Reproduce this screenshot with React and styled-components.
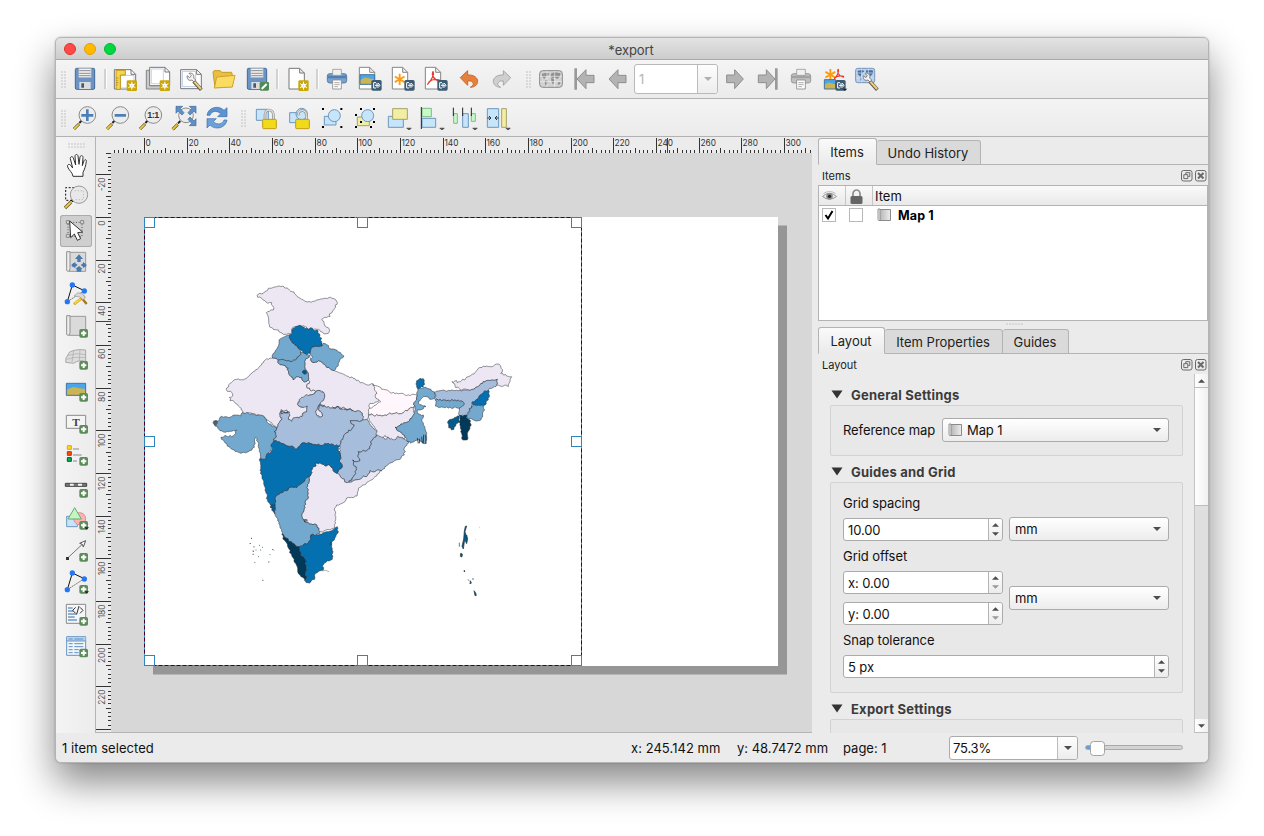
import React from "react";
import styled, { createGlobalStyle } from "styled-components";

const Global = createGlobalStyle`
  * { box-sizing: border-box; }
  html, body { margin: 0; background: #fff; }
  body { font-family: Inter, "Liberation Sans", sans-serif; font-size: 13px; color: #111; overflow: hidden; }
  svg { display: block; overflow: visible; flex: none; }
`;

/* ---------- window frame ---------- */
const Desktop = styled.div`
  width: 1264px;
  height: 836px;
  padding: 37px 55px;
  overflow: hidden;
`;
const Window = styled.div`
  width: 1154px;
  height: 726px;
  display: flex;
  flex-direction: column;
  border: 1px solid #b4b4b4;
  border-radius: 6px;
  background: #ebebeb;
  overflow: hidden;
  box-shadow: 0 19px 38px rgba(0, 0, 0, 0.48), 0 0 2px rgba(0, 0, 0, 0.25);
`;
const TitleBar = styled.div`
  height: 22px;
  flex: none;
  display: grid;
  grid-template-columns: 100px 1fr 102px;
  align-items: center;
  background: linear-gradient(#e3e3e3, #cdcdcd);
  border-bottom: 1px solid #a9a9a9;
`;
const Lights = styled.div`
  display: flex;
  gap: 8px;
  padding-left: 8px;
`;
const Light = styled.span`
  width: 12px;
  height: 12px;
  border-radius: 50%;
  background: ${(p) => p.$c};
  border: 1px solid ${(p) => p.$b};
`;
const Title = styled.div`
  text-align: center;
  color: #444;
  padding-top: 2px;
  letter-spacing: -0.1px;
`;

/* ---------- toolbars ---------- */
const ToolBar = styled.div`
  height: ${(p) => p.$h}px;
  flex: none;
  display: flex;
  align-items: flex-start;
  background: linear-gradient(#f4f4f4, #ebebeb);
  border-bottom: 1px solid #b2b2b2;
`;
const ToolButton = styled.div`
  width: 33px;
  height: 31px;
  padding: 7px 5px 0 4px;
`;
const Separator = styled.div`
  width: 7px;
  height: 20px;
  margin-top: 9px;
  display: flex;
  justify-content: center;
  &::before {
    content: "";
    width: 2px;
    background: #d2d2d2;
    border-right: 1px solid #fbfbfb;
  }
`;
const Dots = styled.div`
  width: ${(p) => p.$w}px;
  height: ${(p) => p.$h}px;
  flex: none;
  margin: ${(p) => p.$m};
  background-image: radial-gradient(circle at 1px 1px, #c2c2c2 0.5px, transparent 0.9px);
  background-size: 3px 3px;
`;
const PageCombo = styled.div`
  width: 84px;
  height: 30px;
  margin: 4px 1px 0 0;
  display: flex;
  align-items: center;
  border: 1px solid #b9b9b9;
  border-radius: 3px;
  background: #fff;
  color: #b5b5b5;
  padding-left: 4px;
`;
const ComboArrow = styled.div`
  width: ${(p) => p.$w}px;
  align-self: stretch;
  margin-left: auto;
  display: flex;
  align-items: center;
  justify-content: center;
  border-left: 1px solid #bcbcbc;
  background: linear-gradient(#fdfdfd, #ededed);
  border-radius: 0 3px 3px 0;
`;

/* ---------- body ---------- */
const Body = styled.div`
  height: 596px;
  flex: none;
  display: flex;
`;
const SideTools = styled.div`
  width: 40px;
  flex: none;
  border-right: 1px solid #b4b4b4;
  background: linear-gradient(90deg, #f4f4f4, #ececec);
`;
const SideButton = styled.div`
  width: 32px;
  height: 32px;
  margin-left: 4px;
  padding: 4px;
  border-radius: 3px;
  ${(p) => p.$on && "background:#cfcfcf; box-shadow: inset 0 0 0 1px #ababab;"}
`;
const Editor = styled.div`
  width: 716px;
  flex: none;
  display: grid;
  grid-template-columns: 15px 701px;
  grid-template-rows: 16px 579px;
  border-bottom: 1px solid #b4b4b4;
`;
const RulerBox = styled.div`
  overflow: hidden;
  background: #ececec;
`;
const Canvas = styled.div`
  position: relative;
  overflow: hidden;
  background: #d7d7d7;
`;
const Paper = styled.div`
  position: absolute;
  left: 33px;
  top: 64px;
  width: 634px;
  height: 449px;
  background: #fff;
  box-shadow: 9px 8.5px 0 #969696;
`;

/* ---------- dock ---------- */
const Dock = styled.div`
  width: 396px;
  display: flex;
  flex-direction: column;
`;
const Tabs = styled.div`
  height: 27px;
  margin: 1px 0 0 6px;
  flex: none;
  display: flex;
  align-items: flex-end;
  border-bottom: 1px solid #b3b3b3;
`;
const Tab = styled.div`
  width: ${(p) => p.$w}px;
  height: ${(p) => (p.$on ? 27 : 25)}px;
  margin-bottom: -1px;
  padding-right: 1px;
  display: flex;
  align-items: center;
  justify-content: center;
  color: #222;
  border: 1px solid #b3b3b3;
  border-left-width: ${(p) => (p.$joined ? 0 : 1)}px;
  border-bottom-color: ${(p) => (p.$on ? "#ebebeb" : "#b3b3b3")};
  border-radius: 3px 3px 0 0;
  background: ${(p) => (p.$on ? "linear-gradient(#fafafa,#ebebeb)" : "#dadada")};
`;
const DockTitle = styled.div`
  height: 20px;
  flex: none;
  padding: 2px 1px 0 10px;
  display: flex;
  align-items: center;
  font-size: 11px;
  color: #222;
  span { flex: 1; }
`;
const Table = styled.div`
  height: 136px;
  flex: none;
  margin-left: 6px;
  border: 1px solid #b3b3b3;
  background: #fff;
`;
const TableHead = styled.div`
  height: 20px;
  display: flex;
  border-bottom: 1px solid #b3b3b3;
  background: linear-gradient(#fafafa, #e9e9e9);
`;
const HeadCell = styled.div`
  width: ${(p) => p.$w};
  display: flex;
  align-items: center;
  padding: 1px 0 0 ${(p) => p.$pl}px;
  border-right: ${(p) => (p.$last ? 0 : 1)}px solid #c6c6c6;
`;
const TableRow = styled.div`
  display: flex;
  align-items: center;
  height: 18px;
  padding-left: 3px;
  font-weight: 700;
  font-size: 12.5px;
  color: #000;
`;
const ItemName = styled.div`
  margin-left: 6px;
  letter-spacing: 0.15px;
`;
const Check = styled.div`
  width: 14px;
  height: 14px;
  flex: none;
  margin-right: ${(p) => p.$mr}px;
  border: 1px solid #b9b9b9;
  background: #fff;
`;
const Scroll = styled.div`
  height: 359px;
  display: flex;
  overflow: hidden;
`;
const Form = styled.div`
  width: 382px;
  padding: 10px 11px 0 18px;
  flex: none;
  overflow: hidden;
`;
const Heading = styled.div`
  height: 21px;
  margin-top: ${(p) => p.$mt || 0}px;
  display: flex;
  align-items: center;
  gap: 8px;
  padding-left: 1px;
  font-weight: 700;
  color: #3b3b3b;
  letter-spacing: 0.22px;
`;
const Group = styled.div`
  height: ${(p) => p.$h}px;
  padding: ${(p) => p.$pt}px 13px 0 12px;
  border: 1px solid #d2d2d2;
  border-radius: 2px;
  background: #e8e8e8;
`;
const Line = styled.div`
  display: flex;
  align-items: ${(p) => p.$align || "center"};
  gap: ${(p) => p.$gap || 0}px;
  margin-top: ${(p) => p.$mt || 0}px;
`;
const Label = styled.div`
  height: 18px;
  line-height: 18px;
  width: ${(p) => p.$w || "auto"};
  margin-top: ${(p) => p.$mt || 0}px;
  white-space: nowrap;
  letter-spacing: -0.07px;
`;
const Combo = styled.div`
  width: ${(p) => p.$w}px;
  height: 24px;
  display: flex;
  align-items: center;
  gap: 4px;
  padding: 0 7px 0 5px;
  border: 1px solid #ababab;
  border-radius: 3px;
  background: linear-gradient(#fff, #ececec);
  span { flex: 1; letter-spacing: -0.1px; }
`;
const SpinBox = styled.div`
  width: ${(p) => p.$w}px;
  height: 23px;
  display: flex;
  align-items: center;
  padding-left: 4px;
  border: 1px solid #ababab;
  border-radius: 3px;
  background: #fff;
  span { flex: 1; padding-top: 1px; letter-spacing: -0.1px; }
`;
const SpinArrows = styled.div`
  width: 14px;
  align-self: stretch;
  display: flex;
  flex-direction: column;
  align-items: center;
  justify-content: center;
  gap: 5px;
  border-left: 1px solid #b4b4b4;
  background: linear-gradient(#fff, #ececec);
  border-radius: 0 3px 3px 0;
`;
const Stack = styled.div`
  display: flex;
  flex-direction: column;
  gap: 8px;
`;
const ScrollBar = styled.div`
  width: 14px;
  display: flex;
  flex-direction: column;
  border-left: 1px solid #c3c3c3;
  background: #dfdfdf;
`;
const ScrollPart = styled.div`
  height: ${(p) => p.$h}px;
  margin-top: ${(p) => p.$mt || 0};
  display: flex;
  align-items: center;
  justify-content: center;
  background: linear-gradient(90deg, #fff, #f0f0f0);
  border-bottom: 1px solid #bdbdbd;
`;

/* ---------- status bar ---------- */
const Status = styled.div`
  height: 29px;
  flex: none;
  display: flex;
  align-items: center;
  padding: 1px 0 0 6px;
  background: #ebebeb;
`;
const StatusText = styled.div`
  width: ${(p) => p.$w}px;
  white-space: nowrap;
  letter-spacing: ${(p) => p.$ls || 0}px;
`;
const ZoomCombo = styled.div`
  width: 129px;
  height: 24px;
  display: flex;
  align-items: center;
  padding-left: 3px;
  border: 1px solid #ababab;
  border-radius: 3px;
  background: #fff;
  letter-spacing: -0.2px;
`;
const Slider = styled.div`
  position: relative;
  width: 98px;
  height: 5px;
  margin: 0 0 2px 7px;
  border: 1px solid #a9a9a9;
  border-radius: 3px;
  background: linear-gradient(90deg, #5aa0ea 10px, #d3d3d3 10px);
  &::after {
    content: "";
    position: absolute;
    left: 4px;
    top: -5px;
    width: 13px;
    height: 13px;
    border: 1px solid #a3a3a3;
    border-radius: 3.5px;
    background: #fdfdfd;
  }
`;

/* ---------- small glyphs ---------- */
const Tri = ({ up, c = "#4d4d4d", w = 8, h = 4 }) => (
  <svg width={w} height={h} viewBox="0 0 8 4"><path d={up ? "M0 4L4 0L8 4Z" : "M0 0L4 4L8 0Z"} fill={c} /></svg>
);
const MapGlyph = () => (
  <svg width="15" height="14" viewBox="0 0 15 14">
    <defs><linearGradient id="mg"><stop offset="0" stopColor="#b5b5b5" /><stop offset="1" stopColor="#ededed" /></linearGradient></defs>
    <path d="M2.5 1.5h11v11h-11z" fill="url(#mg)" stroke="#8a8a8a" />
    <path d="M1 1h2v11.5q-2 .5-2-1z" fill="#eee" stroke="#8a8a8a" strokeWidth=".9" />
  </svg>
);
const DockButtons = () => (
  <svg width="26" height="12" viewBox="0 0 26 12" fill="none" stroke="#6a6a6a">
    <rect x=".5" y=".5" width="10.5" height="10.5" rx="2" />
    <path d="M4.8 4.5V2.7h4v3.8H7.3M2.8 4.7h4v3.9h-4z" />
    <rect x="14.5" y=".5" width="10.5" height="10.5" rx="2" />
    <path d="M17 3l5.5 5.5M22.5 3L17 8.500" strokeWidth="2" />
  </svg>
);

/* Icons are drawn on a shared sheet at three units to the pixel; x and y pick each 72-unit cell. */
const Icon = ({ x, y, children }) => (
  <svg width="24" height="24" viewBox={`${x} ${y} 72 72`}>{children}</svg>
);
const Plus = ({ x, y }) => (
  <g>
    <rect x={x} y={y} width="26" height="26" rx="5" fill="#5b8c5a" />
    <path d={`M${x + 13} ${y + 5}v16M${x + 5} ${y + 13}h16`} stroke="#fff" strokeWidth="6" />
  </g>
);
const Star = ({ x, y }) => (
  <g>
    <rect x={x} y={y} width="31" height="32" rx="4" fill="#c9a60a" />
    <path d={`M${x + 15.500} ${y + 4}v24M${x + 5} ${y + 10}l21 12M${x + 5} ${y + 22}l21-12`} stroke="#fff" strokeWidth="3" />
    <circle cx={x + 15.5} cy={y + 16} r="6.5" fill="#fff" />
    <circle cx={x + 15.5} cy={y + 16} r="2.2" fill="#e6d58a" />
  </g>
);
const Export = ({ x, y }) => (
  <g>
    <rect x={x} y={y} width="31" height="32" rx="5" fill="#3d5b73" />
    <path d={`M${x + 14} ${y + 8}h-7v16h7M${x + 11} ${y + 16}h13M${x + 17} ${y + 9}v14M${x + 20} ${y + 9}l6 7-6 7`} fill="none" stroke="#fff" strokeWidth="3" />
  </g>
);
const Caret = ({ x, y }) => <path d={`M${x} ${y}h14v2l-5 5h-4l-5-5z`} fill="#555" />;
const Floppy = ({ x }) => (
  <g>
    <rect x={x} y="115" width="58" height="63" rx="4" fill="#6b93c4" stroke="#43699a" strokeWidth="3" />
    <path d={`M${x + 10} 115h38v28h-38z`} fill="#f0f0f0" stroke="#8c9fb3" strokeWidth="2" />
    <path d={`M${x + 12} 122h34M${x + 12} 130h34M${x + 12} 137h34`} stroke="#8e8e8e" strokeWidth="3" />
    <path d={`M${x + 12} 156h34v21h-34z`} fill="#dcdcdc" />
    <path d={`M${x + 18} 160h8v13h-8z`} fill="#3c5a80" />
  </g>
);
const Sheet = ({ x, w = 46 }) => (
  <path d={`M${x} 112h${w - 15}l15 15v50h-${w}zM${x + w - 15} 112v15h15`} fill="#fff" stroke="#858585" strokeWidth="3" />
);
const Printer = ({ x, a, b, s }) => (
  <g stroke={s} strokeWidth="2.5">
    <rect x={x} y="131" width="58" height="28" rx="7" fill={a} />
    <path d={`M${x + 1} 137h56v8h-56z`} fill={b} stroke="none" />
    <path d={`M${x + 16} 118h26v18h-26z`} fill="#f0f0f0" stroke="#9a9a9a" />
    <path d={`M${x + 16} 150h26v27h-26z`} fill="#fff" stroke="#888" />
    <path d={`M${x + 21} 158h16M${x + 21} 164h16M${x + 21} 170h11`} stroke="#999" />
  </g>
);
const Lens = ({ cx, cy = 255, r = 25, children }) => (
  <g>
    <path d={`M${cx - 40} ${cy + 42}L${cx - 25} ${cy + 27}`} stroke="#4d4a28" strokeWidth="9" />
    <path d={`M${cx - 40} ${cy + 42}L${cx - 26} ${cy + 28}`} stroke="#f3c832" strokeWidth="5.500" />
    <path d={`M${cx - 24} ${cy + 24}l7-7`} stroke="#222" strokeWidth="6" />
    <circle cx={cx} cy={cy} r={r} fill="#ececec" stroke="#8b8b8b" strokeWidth="3" />
    {children}
  </g>
);
const ArrowLeft = ({ x }) => (
  <path d={`M${x} 147l27-28v17h24v22h-24v18z`} fill="#b3b3b3" stroke="#8e8e8e" strokeWidth="3" strokeLinejoin="round" />
);
const ArrowRight = ({ x }) => (
  <path d={`M${x + 50} 147l-26-28v16h-24v23h24v18z`} fill="#b3b3b3" stroke="#8e8e8e" strokeWidth="3" strokeLinejoin="round" />
);
const Asterisk = ({ x, y, r }) => (
  <path d={`M${x} ${y - r}v${2 * r}M${x - r * 0.87} ${y - r / 2}l${r * 1.74} ${r}M${x - r * 0.87} ${y + r / 2}l${r * 1.74} ${-r}`} stroke="#ff9a0d" strokeWidth="5.5" />
);
const Wrench = ({ x, y }) => (
  <g>
    <path d={`M${x + 22} ${y + 25}L${x + 45} ${y + 50}`} stroke="#5e5a48" strokeWidth="11" />
    <path d={`M${x + 24} ${y + 26}L${x + 44} ${y + 48}`} stroke="#f0d080" strokeWidth="6" />
    <path d={`M${x + 3} ${y + 8}c-3 10 5 17 14 13l6 6 5-6-6-6c3-9-4-17-14-14l7 7-5 6z`} fill="#f2f2f2" stroke="#707070" strokeWidth="2.500" strokeLinejoin="round" />
  </g>
);
const Picture = ({ x, y, w, h }) => (
  <g>
    <path d={`M${x} ${y}h${w}v${h}h${-w}z`} fill="#4aa6e8" />
    <path d={`M${x} ${y + h * 0.55}l${w * 0.35} ${-h * 0.25}l${w * 0.65} ${h * 0.2}v${h / 2}h${-w}z`} fill="#c9b456" />
    <path d={`M${x} ${y}h${w}v${h}h${-w}z`} fill="none" stroke="#47749e" strokeWidth="3" />
  </g>
);
const Acrobat = ({ x, y, s }) => (
  <path transform={`translate(${x} ${y}) scale(${s})`} d="M17 0c4 8 0 20-17 40M17 0c-5 10 0 24 20 30M4 32c10-8 24-9 34-5" fill="none" stroke="#e83a2a" strokeWidth="4" />
);
const Corners = ({ x, y, w, h }) => (
  <path d={`M${x} ${y}h6M${x + w} ${y}h6M${x} ${y + h}h6M${x + w} ${y + h}h6`} stroke="#000" strokeWidth="6" />
);
const BLUE = { fill: "#c6e4fa", stroke: "#6d97bd", strokeWidth: 3 };
const YEL = { fill: "#f2efa3", stroke: "#a5a06a", strokeWidth: 3 };
const GRN = { fill: "#c8fac8", stroke: "#7fb98a", strokeWidth: 3 };

const Lock = ({ x, open }) => {
  const shackle = open ? `M${x + 8} 256c2-20 26-18 25 2v10` : `M${x + 8} 267v-12c0-20 25-20 25 0v12`;
  return (
    <g>
      <path d={shackle} fill="none" stroke="#8a8a8a" strokeWidth="8" />
      <path d={shackle} fill="none" stroke="#dedede" strokeWidth="4" />
      <rect x={x + 1} y="268" width="41" height="28" rx="3" fill="#f0da1c" stroke="#c49b12" strokeWidth="3" />
    </g>
  );
};

const fileTools = [
  <Icon x={69} y={111}><Floppy x={76} /></Icon>,
  "sep",
  <Icon x={189} y={111}>
    <path d="M193 119h50l14 14v44h-64z" fill="#fff" stroke="#777" strokeWidth="3" />
    <path d="M212 136h40v38h-40z" fill="none" stroke="#b9c8ee" strokeWidth="3" />
    <path d="M243 119v14h14" fill="none" stroke="#777" strokeWidth="3" />
    <path d="M198 121h28v14h-15v43h-13z" fill="#f5d450" stroke="#bd981b" strokeWidth="3" />
    <path d="M199 144h6M199 151h4M199 158h6M199 165h4" stroke="#8b6d10" strokeWidth="2" />
    <Star x={230} y={151} />
  </Icon>,
  <Icon x={288} y={111}>
    <path d="M289 121h12v46h42v10h-54z" fill="#cacaca" stroke="#858585" strokeWidth="3" />
    <path d="M299 112h46l14 14v41h-60z" fill="#fff" stroke="#777" strokeWidth="3" />
    <path d="M304 117h36v44h-36z" fill="none" stroke="#c7d3f2" strokeWidth="3" />
    <path d="M345 112v14h14" fill="none" stroke="#777" strokeWidth="3" />
    <Star x={329} y={151} />
  </Icon>,
  <Icon x={387} y={111}>
    <path d="M392 119h48l14 14v43h-62z" fill="#fff" stroke="#777" strokeWidth="3" />
    <path d="M397 124h40v46h-40z" fill="none" stroke="#b9c8ee" strokeWidth="3" />
    <path d="M440 119v14h14" fill="none" stroke="#777" strokeWidth="3" />
    <Wrench x={409} y={129} />
  </Icon>,
  <Icon x={486} y={111}>
    <path d="M489 126l3-4h19l4 5h30l2 9v34l-52 3z" fill="#e9bf3d" stroke="#c69a28" strokeWidth="3" strokeLinejoin="round" />
    <path d="M500 141l55-5-8 35-54 3z" fill="#fbdc62" stroke="#cfa22e" strokeWidth="3" strokeLinejoin="round" />
  </Icon>,
  <Icon x={585} y={111}>
    <Floppy x={592} />
    <rect x="629" y="156" width="28" height="26" rx="4" fill="#4f8a55" />
    <path d="M635 177l15-15" stroke="#fff" strokeWidth="6" />
  </Icon>,
  "sep",
  <Icon x={705} y={111}><path d="M717 115h32l14 14v48h-46zM749 115v14h14" fill="#fff" stroke="#777" strokeWidth="3" /><Star x={745} y={151} /></Icon>,
  "sep",
  <Icon x={45} y={111}><Printer x={52} a="#7ba1cd" b="#4e7fb5" s="#4a6f99" /></Icon>,
  <Icon x={144} y={111}><Sheet x={148} /><Picture x={150} y={134} w={44} h={29} /><Export x={184} y={150} /></Icon>,
  <Icon x={243} y={111}><Sheet x={247} /><Asterisk x={269} y={148} r={17} /><Export x={283} y={150} /></Icon>,
  <Icon x={342} y={111}><Sheet x={346} /><Acrobat x={352} y={124} s={1} /><Export x={382} y={150} /></Icon>,
  <Icon x={441} y={111}>
    <path d="M451 143l22-21v13c20-1 30 9 30 19s-8 17-22 18c8-5 11-10 7-15-3-4-9-5-15-4v13z" fill="#e5813d" stroke="#c86a2a" strokeWidth="3" strokeLinejoin="round" />
  </Icon>,
  <Icon x={540} y={111}>
    <path d="M602 143l-22-21v13c-20-1-30 9-30 19s8 17 22 18c-8-5-11-10-7-15 3-4 9-5 15-4v13z" fill="#cfcfcf" stroke="#a6a6a6" strokeWidth="3" strokeLinejoin="round" />
  </Icon>,
  "grip",
  <Icon x={687} y={111}>
    <rect x="689" y="122" width="68" height="50" rx="9" fill="#d2d2d2" stroke="#8a8a8a" strokeWidth="3" />
    <path d="M696 131l14-3 9 3-6 8-6 2-4 6-7-8zM707 149l7 3-2 10-5 5-3-9zM724 130l10-3 18 3-2 9-8 8-6-4-8 1-7-4zM723 144l9 2 2 8-5 10-5-10zM743 157l8-1-1 7-6 1z" fill="#909090" />
    <path d="M711 123v48M734 123v48M690 139h66M690 155h66" stroke="#f2f2f2" strokeWidth="2" />
  </Icon>,
  <Icon x={786} y={111}><path d="M797 115v64" stroke="#999" strokeWidth="8" /><ArrowLeft x={801} /></Icon>,
  <Icon x={45} y={111}><ArrowLeft x={57} /></Icon>,
  "page",
  <Icon x={399} y={111}><ArrowRight x={410} /></Icon>,
  <Icon x={498} y={111}><path d="M559 115v64" stroke="#999" strokeWidth="8" /><ArrowRight x={505} /></Icon>,
  <Icon x={597} y={111}><Printer x={604} a="#c0c0c0" b="#a2a2a2" s="#8d8d8d" /></Icon>,
  <Icon x={696} y={111}>
    <Asterisk x={721} y={134} r={17} /><Acrobat x={730} y={117} s={0.85} />
    <Picture x={703} y={149} w={34} h={28} /><Export x={736} y={150} /><path d="M757 176h15l-7 7z" fill="#222" />
  </Icon>,
  <Icon x={795} y={111}>
    <rect x="797" y="115" width="57" height="43" rx="6" fill="#b9d2ee" stroke="#7495bd" strokeWidth="3" />
    <path d="M803 122l14-2 6 4-8 8-4 8-8-8zM828 121h20l2 8-8 9-6-6-8 1zM810 142l6 3-3 9zM828 137l6 4-3 10z" fill="#4b6e98" />
    <path d="M815 116v41M835 116v41M798 129h55M798 144h55" stroke="#dce9f7" strokeWidth="2" />
    <Wrench x={817} y={129} />
  </Icon>,
];

const viewTools = [
  <Icon x={69} y={228}><Lens cx={112}><path d="M112 238v35M94 256h36" stroke="#4c7fb8" strokeWidth="8" /></Lens></Icon>,
  <Icon x={168} y={228}><Lens cx={211}><path d="M194 256h34" stroke="#4c7fb8" strokeWidth="8" /></Lens></Icon>,
  <Icon x={267} y={228}>
    <Lens cx={310}><text x="310" y="264" textAnchor="middle" fontSize="27" fontWeight="700" fontFamily="Liberation Sans" fill="#333" textLength="36">1:1</text></Lens>
  </Icon>,
  <Icon x={366} y={228}>
    <Lens cx={408} cy={256} r={22} />
    <path d="M378 229h20l-7 7 11 12-6 7-12-12-6 7zM438 229h-20l7 7-11 12 6 7 12-12 6 7zM438 287h-20l7-7-11-12 6-7 12 12 6-7z" fill="#5f8fc6" stroke="#3f6a9c" strokeWidth="2" />
  </Icon>,
  <Icon x={465} y={228}>
    <path d="M471 256c3-24 35-32 51-15l9-8v27h-28l9-9c-12-11-28-8-32 5z" fill="#5e93d1" stroke="#3d6eab" strokeWidth="2" />
    <path d="M531 270c-3 24-35 32-51 15l-9 9v-28h28l-9 9c12 11 28 8 32-5z" fill="#6da1dc" stroke="#3d6eab" strokeWidth="2" />
  </Icon>,
  "grip",
  <Icon x={612} y={228}><path d="M619 238h36v33h-36z" {...BLUE} /><Lock x={637} /></Icon>,
  <Icon x={711} y={228}><path d="M719 248h30v30h-30z" {...BLUE} /><circle cx="755" cy="252" r="17" {...BLUE} /><Lock x={736} open /></Icon>,
  <Icon x={30} y={228}><path d="M43 259h35v26h-35z" {...BLUE} /><circle cx="73" cy="257" r="18" {...BLUE} /><Corners x={36} y={237} w={55} h={54} /></Icon>,
  <Icon x={129} y={228}>
    <path d="M142 261h36v26h-36z" {...YEL} /><circle cx="173" cy="257" r="18" {...BLUE} />
    <path d="M150 237h6M189 237h6M150 276h6M189 276h6M135 255h6M180 291h6M135 291h6" stroke="#000" strokeWidth="6" />
  </Icon>,
  <Icon x={228} y={228}><path d="M235 259h45v33h-45z" {...BLUE} /><path d="M248 236h44v32h-44z" {...YEL} /><Caret x={290} y={293} /></Icon>,
  <Icon x={327} y={228}><path d="M336 235h28v25h-28z" {...GRN} /><path d="M336 265h41v27h-41z" {...BLUE} /><path d="M334 231v66" stroke="#222" strokeWidth="3" /><Caret x={389} y={293} /></Icon>,
  <Icon x={426} y={228}>
    <path d="M431 251h11v29h-11zM484 251h12v23h-12z" {...GRN} /><path d="M458 251h17v41h-17z" {...BLUE} />
    <path d="M430 233v25M458 233v25M484 233v25" stroke="#222" strokeWidth="3" /><Caret x={488} y={293} />
  </Icon>,
  <Icon x={525} y={228}>
    <path d="M532 236h34v56h-34z" {...BLUE} /><path d="M575 236h14v56h-14z" {...YEL} />
    <path d="M532 264h11M537 258l6 6-6 6M566 264h-11M561 258l-6 6 6 6" fill="none" stroke="#333" strokeWidth="3" /><Caret x={587} y={293} />
  </Icon>,
];

const roll = (y) => (
  <g>
    <path d={`M45 ${y + 2}h50v57h-50z`} fill="#dadada" stroke="#999" strokeWidth="3" />
    <path d={`M38 ${y}h10v50q0 9-6 9t-4-9z`} fill="#eee" stroke="#8f8f8f" strokeWidth="3" />
  </g>
);
const nodes = (y) => (
  <g>
    <path d={`M40 ${y + 50}l15-50 36 17`} fill="none" stroke="#111" strokeWidth="3" />
    <path d={`M91 ${y + 17}l-51 33`} stroke="#222" strokeWidth="3" strokeDasharray="3 4" />
    <g fill="#2477f2"><circle cx="55" cy={y} r="8" /><circle cx="91" cy={y + 18} r="8" /><circle cx="40" cy={y + 50} r="8" /></g>
  </g>
);
const sideTools = [
  <Icon x={30} y={63}>
    <path d="M57 127c-1-11-12-18-16-28-2-8 5-10 9-5l6 8-7-28c-1-7 7-8 9-2l7 21-2-27c1-6 8-6 9 0l3 25 3-22c2-6 9-5 9 1l-2 25 5-15c3-5 8-3 7 2-2 14-5 24-10 33v12z" fill="#fff" stroke="#333" strokeWidth="3" strokeLinejoin="round" />
  </Icon>,
  <Icon x={30} y={159}>
    <path d="M61 161H35v38h26" fill="none" stroke="#111" strokeWidth="3" strokeDasharray="6 5" />
    <path d="M33 222l18-18" stroke="#6d581c" strokeWidth="10" /><path d="M34 221l16-16" stroke="#edc85a" strokeWidth="6" />
    <path d="M53 202l6-6" stroke="#111" strokeWidth="7" />
    <circle cx="75" cy="182" r="26" fill="#e8e8e8" stroke="#999" strokeWidth="3" />
    <path d="M62 170h26v27H62" fill="none" stroke="#bbb" strokeWidth="3" strokeDasharray="4 5" />
  </Icon>,
  <Icon x={30} y={255}>
    <path d="M42 265h42v42h-42z" fill="none" stroke="#555" strokeWidth="3" strokeDasharray="3 5" />
    <path d="M37 260h9v9h-9zM80 260h9v9h-9zM37 301h9v9h-9z" fill="#ddd" stroke="#777" strokeWidth="2.5" />
    <path d="M47 261l39 33-15 2 9 18-10 5-9-19-11 11z" fill="#fff" stroke="#333" strokeWidth="3" strokeLinejoin="round" />
  </Icon>,
  <Icon x={30} y={351}>
    {roll(353)}
    <path d="M75 361l12 14h-7v9h-10v-9h-7zM68 413v-8h-4l11-9 11 9h-4v8zM53 391l11-7v4l7 5-7 5v4l-11-5zM97 391l-10-7v4l-7 5 7 5v4l10-5z" fill="#4a79ad" />
  </Icon>,
  <Icon x={30} y={447}>
    {nodes(453)}
    <path d="M60 511l32-26" stroke="#d99c14" strokeWidth="8" /><path d="M62 509l29-24" stroke="#ffe03a" strokeWidth="4" />
    <path d="M80 488l18 22" stroke="#a9761c" strokeWidth="7" /><path d="M60 486l12-10 14 4 8 12-8 5-8-8z" fill="#d9d9d9" stroke="#999" strokeWidth="2" />
  </Icon>,
  <Icon x={30} y={543}>{roll(545)}<Plus x={76} y={585} /></Icon>,
  <Icon x={30} y={639}>
    <path d="M36 672l11-18q20-10 48-6v35q-18-8-36 5l-24-3z" fill="#dcdcdc" stroke="#9c9c9c" strokeWidth="2.500" />
    <path d="M42 664q28-9 52-2M38 676q26-10 56-5M59 650l-5 34M78 646l-2 34" fill="none" stroke="#aaa" strokeWidth="2" /><Plus x={76} y={681} />
  </Icon>,
  <Icon x={30} y={735}><Picture x={37} y={748} w={58} h={36} /><Plus x={76} y={777} /></Icon>,
  <Icon x={30} y={33}>
    <path d="M37 46h58v39h-58z" fill="#f4f4f4" stroke="#8b8b8b" strokeWidth="3" />
    <text x="66" y="77" textAnchor="middle" fontFamily="Liberation Serif" fontWeight="700" fontSize="34" fill="#444">T</text><Plus x={76} y={75} />
  </Icon>,
  <Icon x={30} y={129}>
    <path d="M40 137h12v11h-12z" fill="#fcdc1c" stroke="#f09a10" strokeWidth="3" /><path d="M40 155h12v11h-12z" fill="#ff4c0c" stroke="#c62f00" strokeWidth="3" />
    <path d="M40 173h12v11h-12z" fill="#06b454" stroke="#08552c" strokeWidth="3" /><path d="M57 147h18M57 165h26M57 183h12" stroke="#aaa" strokeWidth="5" /><Plus x={76} y={171} />
  </Icon>,
  <Icon x={30} y={225}>
    <path d="M34 250h64v9h-64z" fill="#777" stroke="#444" strokeWidth="3" /><path d="M48 254h11M72 254h12" stroke="#f5f5f5" strokeWidth="6" /><Plus x={76} y={267} />
  </Icon>,
  <Icon x={30} y={321}>
    <path d="M38 349h32v31h-32z" {...BLUE} /><circle cx="77" cy="356" r="18" fill="#fbb4b4" stroke="#dd8f8f" strokeWidth="3" />
    <path d="M62 323l20 34h-40z" fill="#c2f7c4" stroke="#68a871" strokeWidth="3" /><Plus x={76} y={363} /><path d="M91 382h14l-7 7z" fill="#222" />
  </Icon>,
  <Icon x={30} y={417}>
    <path d="M40 475l47-44" stroke="#777" strokeWidth="3" /><path d="M36 471h9v9h-9z" fill="#333" /><path d="M95 422l-18 8 8 3 3 8z" fill="#fff" stroke="#555" strokeWidth="3" /><Plus x={76} y={459} />
  </Icon>,
  <Icon x={30} y={513}>{nodes(519)}<Plus x={76} y={555} /><path d="M91 574h14l-7 7z" fill="#222" /></Icon>,
  <Icon x={30} y={609}>
    <path d="M37 613h58v57h-58z" fill="#f5f5f5" stroke="#8b8b8b" strokeWidth="3" /><path d="M42 624h14M42 633h17M42 642h27M42 651h20M42 660h27" stroke="#6d98c8" strokeWidth="5" />
    <path d="M65 622l-9 9 9 9M78 622l9 9-9 9M75 618l-7 25" fill="none" stroke="#333" strokeWidth="3" /><Plus x={76} y={651} />
  </Icon>,
  <Icon x={30} y={705}>
    <path d="M38 710h57v56h-57z" fill="#f1f6fb" stroke="#6795c4" strokeWidth="3" /><path d="M39 711h55v12h-55z" fill="#b5d4ee" /><path d="M38 723h57" stroke="#6795c4" strokeWidth="3" />
    <path d="M44 717h12M61 717h27M44 731h12M61 731h27M44 740h12M61 740h27M44 749h12M61 749h13M44 758h12M61 758h13" stroke="#5f8fc3" strokeWidth="3" /><Plus x={76} y={746} />
  </Icon>,
];

/* ---------- rulers ---------- */
const MM = 42.667 / 20;
const range = (a, b, s) => Array.from({ length: Math.floor((b - a) / s) + 1 }, (_, i) => a + i * s);
const RulerTop = () => (
  <svg width="701" height="16" viewBox="111 137 701 16">
    {range(-14, 312, 2).map((v) => {
      const x = Math.round(144 + v * MM) + 0.5;
      const y = v % 20 === 0 ? 138 : v % 10 === 0 ? 148 : 150;
      return <path key={v} d={`M${x} ${y}V153`} stroke="#333" />;
    })}
    {range(0, 300, 20).map((v) => (
      <text key={v} x={Math.round(144 + v * MM) + 1.500} y="146" fontSize="8.3" fill="#333">{v}</text>
    ))}
    <path d="M667.5 138V153" stroke="#d00000" />
  </svg>
);
const RulerSide = () => (
  <svg width="15" height="579" viewBox="96 153 15 579">
    {range(-30, 240, 2).map((v) => {
      const y = Math.round(217 + v * MM) + 0.5;
      const x = v % 20 === 0 ? 96 : v % 10 === 0 ? 106 : 108;
      return <path key={v} d={`M${x} ${y}H111`} stroke="#333" />;
    })}
    {range(-20, 220, 20).map((v) => (
      <text key={v} transform={`translate(104.5 ${Math.round(217 + v * MM) + 3.500}) rotate(-90)`} textAnchor="end" fontSize="8.3" fill="#555">{v}</text>
    ))}
    <path d="M96 321.5H111" stroke="#e00000" />
  </svg>
);

/* ---------- map ---------- */
/* Splits each border segment and nudges the new points, the same way from either side of the border. */
const noise = (a, b) => {
  const n = Math.sin(a * 12.9898 + b * 78.233) * 43758.5453;
  return n - Math.floor(n) - 0.5;
};
const rough = (text) => {
  const pts = text.trim().split(/\s+/).map((p) => p.split(",").map(Number));
  const out = [];
  pts.forEach((p, i) => {
    const q = pts[(i + 1) % pts.length];
    out.push(p);
    const flip = p[0] > q[0] || (p[0] === q[0] && p[1] > q[1]);
    const [a, b] = flip ? [q, p] : [p, q];
    const len = Math.hypot(b[0] - a[0], b[1] - a[1]);
    const n = Math.floor(len / 4.5);
    const mids = [];
    for (let k = 1; k < n; k++) {
      const t = k / n;
      const o = noise(a[0] + k * 3, b[1] + k) * 6;
      mids.push([a[0] + (b[0] - a[0]) * t - ((b[1] - a[1]) / len) * o, a[1] + (b[1] - a[1]) * t + ((b[0] - a[0]) / len) * o]);
    }
    if (flip) mids.reverse();
    out.push(...mids);
  });
  return "M" + out.map((p) => p[0].toFixed(1) + " " + p[1].toFixed(1)).join("L") + "Z";
};
const C0 = "#fff7fb", C1 = "#ece7f2", C2 = "#a6bddb", C3 = "#74a9cf", C4 = "#0570b0", C5 = "#045a8d", C6 = "#023858";
const north = [
  [C1, "145,42 160,40 175,25 190,22 208,18 222,20 238,30 252,36 262,50 280,60 292,66 308,64 320,60 332,57 348,55 362,52 378,60 382,68 374,85 366,98 358,102 360,110 340,114 335,120 342,125 345,138 358,148 355,160 342,162 332,155 320,148 300,150 285,140 270,137 255,140 245,150 240,162 225,163 212,158 205,150 190,148 178,140 176,120 174,108 169,98 178,94 190,90 188,78 185,68 168,66 155,55 143,52"],
  [C1, "166,240 180,234 200,236 204,248 210,254 222,256 235,264 232,268 236,280 243,290 250,300 255,295 265,290 275,292 278,302 288,305 295,300 298,310 290,318 300,330 318,334 305,344 290,352 275,360 264,368 266,378 280,382 292,378 290,395 278,400 276,410 262,412 250,414 245,424 235,418 240,405 238,396 222,398 212,395 210,405 216,418 208,428 204,438 200,446 194,438 185,428 170,420 160,408 145,404 130,402 115,398 98,398 94,385 85,378 76,370 72,364 60,362 58,352 68,348 66,338 52,334 50,324 56,314 68,304 80,298 90,300 108,296 120,285 130,275 142,268 150,258 160,248"],
  [C1, "298,226 302,240 312,248 325,242 338,250 350,262 362,268 373,272 384,276 395,280 410,288 430,295 448,304 465,312 480,314 490,312 497,320 500,332 498,345 505,352 512,355 500,366 480,370 476,378 480,390 478,400 476,412 470,420 458,420 457,400 450,394 435,395 425,392 410,388 395,388 385,380 365,384 350,382 338,376 328,375 325,388 336,400 338,408 330,412 320,406 316,394 322,385 330,372 342,356 344,345 340,336 330,332 318,334 300,330 290,318 298,310 295,300 295,280 288,270 284,260 285,250 288,236"],
  [C3, "240,164 238,172 242,180 252,190 262,198 270,208 272,216 268,228 256,240 240,244 222,240 205,240 200,236 188,234 186,228 190,220 200,208 206,196 207,184 212,176 224,170 232,166"],
  [C3, "205,240 222,240 240,244 256,240 268,228 272,216 280,218 295,224 298,228 288,236 285,250 284,260 288,270 295,280 295,300 288,305 278,302 275,292 265,290 255,295 250,300 243,290 236,280 232,268 235,264 222,256 210,254 204,248"],
  [C5, "278,273 284,270 289,274 289,281 283,283 278,279"],
  [C3, "303,206 312,200 325,200 336,198 340,190 350,194 356,202 370,207 385,216 402,228 390,238 385,250 378,262 373,272 362,268 350,262 338,250 325,242 312,248 302,240 308,232 300,224"],
  [C4, "248,146 258,140 268,136 278,140 285,146 295,148 302,143 310,150 320,150 330,165 335,185 336,198 325,200 312,200 303,206 300,220 290,224 280,218 272,210 262,198 252,190 242,180 238,172 240,165 246,160"],
];
const south = [
  [C3, "112,38 130,40 145,42 160,45 178,50 188,68 200,78 215,86 208,95 215,108 205,120 208,128 200,135 198,150 192,158 185,162 184,175 172,178 165,176 163,155 162,145 158,125 152,112 148,120 148,142 130,155 108,160 90,154 72,140 58,125 48,112 60,106 80,110 92,100 95,90 80,94 62,97 45,92 38,80 30,78 24,68 30,62 42,62 45,52 60,50 75,52 90,45 108,48"],
  [C2, "215,86 219,78 223,68 231,58 225,45 227,35 237,38 253,36 255,45 250,58 260,64 265,54 277,52 291,50 293,40 305,35 307,18 295,22 281,18 279,8 290,-8 305,-16 320,-16 333,-26 345,-28 355,-24 359,-15 357,-4 345,12 337,25 331,34 335,46 345,52 353,48 351,40 340,28 343,15 353,16 365,22 380,24 400,20 410,28 425,28 440,32 450,35 465,34 472,40 473,60 458,63 436,62 438,70 448,75 440,88 425,98 415,112 408,128 404,138 385,134 365,132 345,136 325,134 310,128 290,130 278,146 268,144 262,138 240,134 228,130 218,126 205,120 215,108 208,95"],
  [C2, "436,62 458,63 473,60 485,58 492,66 500,78 512,90 518,102 505,115 497,125 495,145 485,152 460,155 458,168 465,182 455,185 443,180 455,210 445,230 432,248 425,248 412,236 404,226 396,220 400,210 412,200 403,185 406,165 404,138 408,128 415,112 425,98 440,88 448,75 438,70"],
  [C2, "518,102 530,108 540,118 560,108 585,110 600,118 612,128 600,140 598,165 585,178 560,188 540,200 530,212 518,210 505,216 495,212 485,230 475,228 465,238 452,240 440,246 432,248 445,230 455,210 443,180 455,185 465,182 458,168 460,155 485,152 495,145 497,125 505,115"],
  [C1, "335,188 345,188 360,198 375,196 384,205 388,216 396,220 404,226 412,236 425,248 440,246 452,240 465,238 475,228 485,230 495,212 505,216 518,210 530,212 515,228 490,245 465,262 458,275 456,288 440,292 425,294 415,308 395,315 388,330 392,355 390,382 375,390 358,392 345,395 342,385 330,372 318,372 305,368 294,358 290,345 300,322 300,308 310,292 308,275 305,262 312,245 312,230 318,222 322,204 333,198"],
  [C3, "312,230 312,245 305,262 308,275 310,292 300,308 300,322 290,345 294,358 305,368 318,372 330,372 342,385 345,395 335,405 318,405 318,418 310,428 295,434 282,440 262,430 245,415 232,402 226,385 218,362 210,345 211,325 209,310 212,290 218,284 235,276 245,272 255,262 276,262 290,250 300,238"],
  [C4, "208,122 218,126 228,130 240,134 262,138 268,144 278,146 290,130 310,128 325,134 345,136 365,132 385,134 404,138 400,152 406,165 403,185 412,200 400,210 396,220 388,216 384,205 375,196 360,198 345,188 335,188 333,198 322,204 318,222 312,230 300,238 290,250 276,262 255,262 245,272 235,276 218,284 212,290 210,310 205,322 196,312 188,300 182,275 176,250 168,215 163,178 172,178 184,175 185,165 195,160 202,148 198,138"],
  [C5, "194,312 210,312 211,325 209,342 200,330"],
  [C6, "230,402 245,415 262,430 282,440 285,455 290,468 302,480 304,500 302,520 304,535 300,542 288,530 278,510 272,490 260,465 248,440 238,420"],
  [C4, "282,440 295,434 310,428 318,418 318,405 335,405 350,402 365,395 380,392 397,380 398,400 388,420 378,432 382,445 382,478 366,482 352,498 355,510 345,512 332,520 330,532 318,545 308,548 300,542 304,535 302,520 304,500 302,480 290,468 285,455"],
];
const east = [
  [C0, "98,103 112,108 125,118 145,122 165,132 185,130 205,135 222,133 232,135 230,150 222,158 225,168 205,178 190,188 165,190 145,192 125,198 100,196 85,190 88,175 108,165 122,155 108,145 108,125"],
  [C1, "85,193 100,196 125,198 145,192 165,190 190,188 205,178 222,170 222,185 215,205 205,215 188,222 175,228 165,232 170,240 185,250 195,262 192,268 175,258 168,268 150,268 135,256 125,262 108,255 110,240 98,225 88,212"],
  [C3, "232,115 262,115 285,127 284,142 275,148 260,140 245,145 235,155 245,165 258,170 240,180 232,180 235,192 250,195 245,210 250,225 258,245 260,265 258,280 245,275 232,270 225,272 212,280 195,262 185,250 170,240 165,232 175,228 188,222 205,215 215,205 222,185 225,168 222,158 230,150 232,135"],
  [C4, "230,92 240,85 250,86 252,98 250,112 240,114 230,112"],
  [C1, "336,95 350,92 352,98 365,92 385,80 405,68 415,55 430,48 450,50 470,42 482,48 488,60 482,70 500,78 515,80 510,95 505,110 498,105 480,108 470,105 472,88 455,90 435,95 420,105 400,118 385,120 360,118 345,108"],
  [C2, "284,128 300,122 320,124 345,122 385,120 400,118 420,105 435,95 455,90 472,88 470,105 455,115 445,120 430,128 415,145 400,158 395,168 385,185 382,200 372,197 358,196 358,180 365,165 368,155 345,150 320,152 300,148 286,150"],
  [C3, "286,150 300,148 320,152 345,150 368,155 372,165 362,172 340,174 310,172 286,168"],
  [C4, "445,120 448,135 445,150 435,165 415,168 400,165 395,160 415,145 430,128"],
  [C3, "395,168 415,165 430,168 434,180 428,195 418,212 400,210 382,205 385,188"],
  [C6, "358,196 380,196 382,206 392,212 390,235 384,245 384,265 376,270 366,268 362,245 360,220"],
  [C5, "325,212 340,206 352,198 358,198 358,215 348,222 342,238 334,240 326,228"],
];
const Region = ({ x, y, list, children }) => (
  <g transform={`translate(${x} ${y}) scale(.33333)`}>
    {list.map(([fill, pts], i) => <path key={i} d={rough(pts)} fill={fill} stroke="#2b3036" strokeOpacity={fill === C1 || fill === C0 ? 0.75 : 0.8} strokeWidth="2" strokeLinejoin="round" />)}
    {children}
  </g>
);
const grips = [[144, 217], [357, 217], [571, 217], [144, 436], [571, 436], [144, 655], [357, 655], [571, 655]];
const MapItem = () => (
  <svg width="438" height="449" viewBox="144 217 438 449">
    <Region x={210} y={280} list={north} />
    <Region x={205} y={400} list={south}>
      <path d="M24 62l12-2 3 8-6 10-7-5z" fill="#333" opacity=".6" />
      <path d="M295 357h11l3 7-11 3zM376 426l6 2-1 8-5-2z" fill="#1d2a36" opacity=".6" />
      <path d="M228 29l9 5 8-4 4 9-10-2-10 5zM345 14l8 6 7-5M382 20l8 6 8-7 8 8 10-6 9 10 10-6 10 8" fill="none" stroke="#20262d" strokeWidth="3" opacity=".6" />
      <path d="M138 415h3M134 429l3 3M147 439v3M143 453l4 1M163 436h2M171 442h2M152 450h2M166 450h2M143 463h3M160 470h2M151 486l-2 2M202 447l4 4M194 464h2M190 486h3M172 541h3" stroke="#26404e" strokeWidth="3" />
      <path d="M352 513q10-5 20 2" fill="none" stroke="#666" strokeWidth="1.5" />
    </Region>
    <Region x={340} y={350} list={east}>
      <path d="M232 264l3 16M239 266l-1 14M245 260l2 20M251 254l-1 26M257 254l1 27" stroke="#272f35" strokeWidth="3" opacity=".85" />
    </Region>
    <g transform="translate(50 500) scale(.33333)" stroke="#1b3442" strokeWidth="2">
      <path d="M1250 78l-5 17 4 12-6 20-3 20-4-8 5-22 2-24 3-14z" fill={C5} />
      <path d="M1250 105l3 12-3 14-4-8zM1232 160l5 2-1 9-5-2zM1242 211l3 2-2 3zM1260 242l4 4-2 6zM1272 272l5 6 2 8-4 1z" fill={C5} />
      <path d="M1228 128v12M1254 238l2 4M1269 234v6M1258 250h3M1289 82h1M1277 118h1" />
    </g>
    <path d="M144.500 665.500V217.500H581.500V665.500Z" fill="none" stroke="#3fa0d4" />
    <path d="M144.500 665.500V217.500H581.500V665.500Z" fill="none" stroke="#4a0028" strokeDasharray="4 2" />
    {grips.map(([x, y]) => <rect key={x + "," + y} x={x + 0.5} y={y + 0.5} width="10" height="10" fill="#fff" stroke="#2e86bd" />)}
  </svg>
);

const renderTools = (list) =>
  list.map((t, i) => {
    if (t === "sep") return <Separator key={i} />;
    if (t === "grip") return <Dots key={i} $w={5} $h={18} $m="11px 4px 0 7px" />;
    if (t === "page")
      return (
        <PageCombo key={i}>1<ComboArrow $w={20}><Tri c="#b0b0b0" /></ComboArrow></PageCombo>
      );
    return <ToolButton key={i}>{t}</ToolButton>;
  });

const Spin = ({ w, value, atMin }) => (
  <SpinBox $w={w}>
    <span>{value}</span>
    <SpinArrows><Tri up w={7} /><Tri w={7} c={atMin ? "#9a9a9a" : "#4d4d4d"} /></SpinArrows>
  </SpinBox>
);
const Section = ({ title, mt }) => (
  <Heading $mt={mt}><svg width="12" height="9" viewBox="0 0 12 9"><path d="M.5.5h11L6 8.500z" fill="#333" /></svg>{title}</Heading>
);

export default function App() {
  return (
    <Desktop>
      <Global />
      <Window>
        <TitleBar>
          <Lights>
            <Light $c="#ff4a48" $b="#e0302f" />
            <Light $c="#ffb900" $b="#e0a100" />
            <Light $c="#00d742" $b="#00b735" />
          </Lights>
          <Title>*export</Title>
        </TitleBar>
        <ToolBar $h={39}><Dots $w={5} $h={18} $m="11px 3px 0 5px" />{renderTools(fileTools)}</ToolBar>
        <ToolBar $h={38}><Dots $w={5} $h={18} $m="11px 3px 0 5px" />{renderTools(viewTools)}</ToolBar>
        <Body>
          <SideTools>
            <Dots $w={17} $h={5} $m="6px 0 3px 12px" />
            {sideTools.map((t, i) => <SideButton key={i} $on={i === 2}>{t}</SideButton>)}
          </SideTools>
          <Editor>
            <RulerBox />
            <RulerBox><RulerTop /></RulerBox>
            <RulerBox><RulerSide /></RulerBox>
            <Canvas><Paper><MapItem /></Paper></Canvas>
          </Editor>
          <Dock>
            <Tabs>
              <Tab $on $w={59}>Items</Tab>
              <Tab $joined $w={104}>Undo History</Tab>
            </Tabs>
            <DockTitle><span>Items</span><DockButtons /></DockTitle>
            <Table>
              <TableHead>
                <HeadCell $w="27px" $pl={3}>
                  <svg width="15" height="11" viewBox="0 0 15 11"><path d="M.5 5.500Q7.500-1 14.500 5.500Q7.500 11 .5 5.500Z" fill="#eee" stroke="#999" /><circle cx="7.500" cy="5.300" r="3.300" fill="#8b8b8b" /><circle cx="7.500" cy="5.300" r="1.600" fill="#222" /><path d="M1.500 2.500Q7.500-1.500 13.500 2.500" fill="none" stroke="#bbb" /></svg>
                </HeadCell>
                <HeadCell $w="27px" $pl={4}>
                  <svg width="13" height="15" viewBox="0 0 13 15"><path d="M3 8V4.500a3.500 3.500 0 0 1 7 0V8" fill="none" stroke="#8d8d8d" strokeWidth="1.700" /><rect x=".5" y="7" width="12" height="8" rx="1.500" fill="#666" /></svg>
                </HeadCell>
                <HeadCell $last $w="auto" $pl={2}>Item</HeadCell>
              </TableHead>
              <TableRow>
                <Check $mr={13}><svg width="12" height="12" viewBox="0 0 12 12"><path d="M2.500 6l2.500 3.500L9.500 2" fill="none" stroke="#000" strokeWidth="2" /></svg></Check>
                <Check $mr={14} />
                <MapGlyph />
                <ItemName>Map 1</ItemName>
              </TableRow>
            </Table>
            <Dots $w={17} $h={2} $m="2px 0 1px 194px" />
            <Tabs>
              <Tab $on $w={67}>Layout</Tab>
              <Tab $joined $w={118}>Item Properties</Tab>
              <Tab $joined $w={66}>Guides</Tab>
            </Tabs>
            <DockTitle><span>Layout</span><DockButtons /></DockTitle>
            <Scroll>
              <Form>
                <Section title="General Settings" />
                <Group $h={51} $pt={12}>
                  <Line>
                    <Label $w="99px">Reference map</Label>
                    <Combo $w={227}><MapGlyph /><span>Map 1</span><Tri /></Combo>
                  </Line>
                </Group>
                <Section title="Guides and Grid" mt={5} />
                <Group $h={211} $pt={11}>
                  <Label>Grid spacing</Label>
                  <Line $mt={5} $gap={6} $align="flex-end">
                    <Spin w={160} value="10.00" />
                    <Combo $w={160}><span>mm</span><Tri /></Combo>
                  </Line>
                  <Label $mt={6}>Grid offset</Label>
                  <Line $mt={6} $gap={6}>
                    <Stack><Spin w={160} value="x: 0.00" atMin /><Spin w={160} value="y: 0.00" atMin /></Stack>
                    <Combo $w={160}><span>mm</span><Tri /></Combo>
                  </Line>
                  <Label $mt={6}>Snap tolerance</Label>
                  <Line $mt={6}><Spin w={326} value="5 px" /></Line>
                </Group>
                <Section title="Export Settings" mt={5} />
                <Group $h={51} $pt={12} />
              </Form>
              <ScrollBar>
                <ScrollPart $h={14}><Tri up w={7} /></ScrollPart>
                <ScrollPart $h={118} />
                <ScrollPart $h={14} $mt="auto"><Tri w={7} /></ScrollPart>
              </ScrollBar>
            </Scroll>
          </Dock>
        </Body>
        <Status>
          <StatusText $w={569} $ls={0.05}>1 item selected</StatusText>
          <StatusText $w={106} $ls={0.05}>x: 245.142 mm</StatusText>
          <StatusText $w={106}>y: 48.7472 mm</StatusText>
          <StatusText $w={106}>page: 1</StatusText>
          <ZoomCombo>75.3%<ComboArrow $w={20}><Tri /></ComboArrow></ZoomCombo>
          <Slider />
        </Status>
      </Window>
    </Desktop>
  );
}
